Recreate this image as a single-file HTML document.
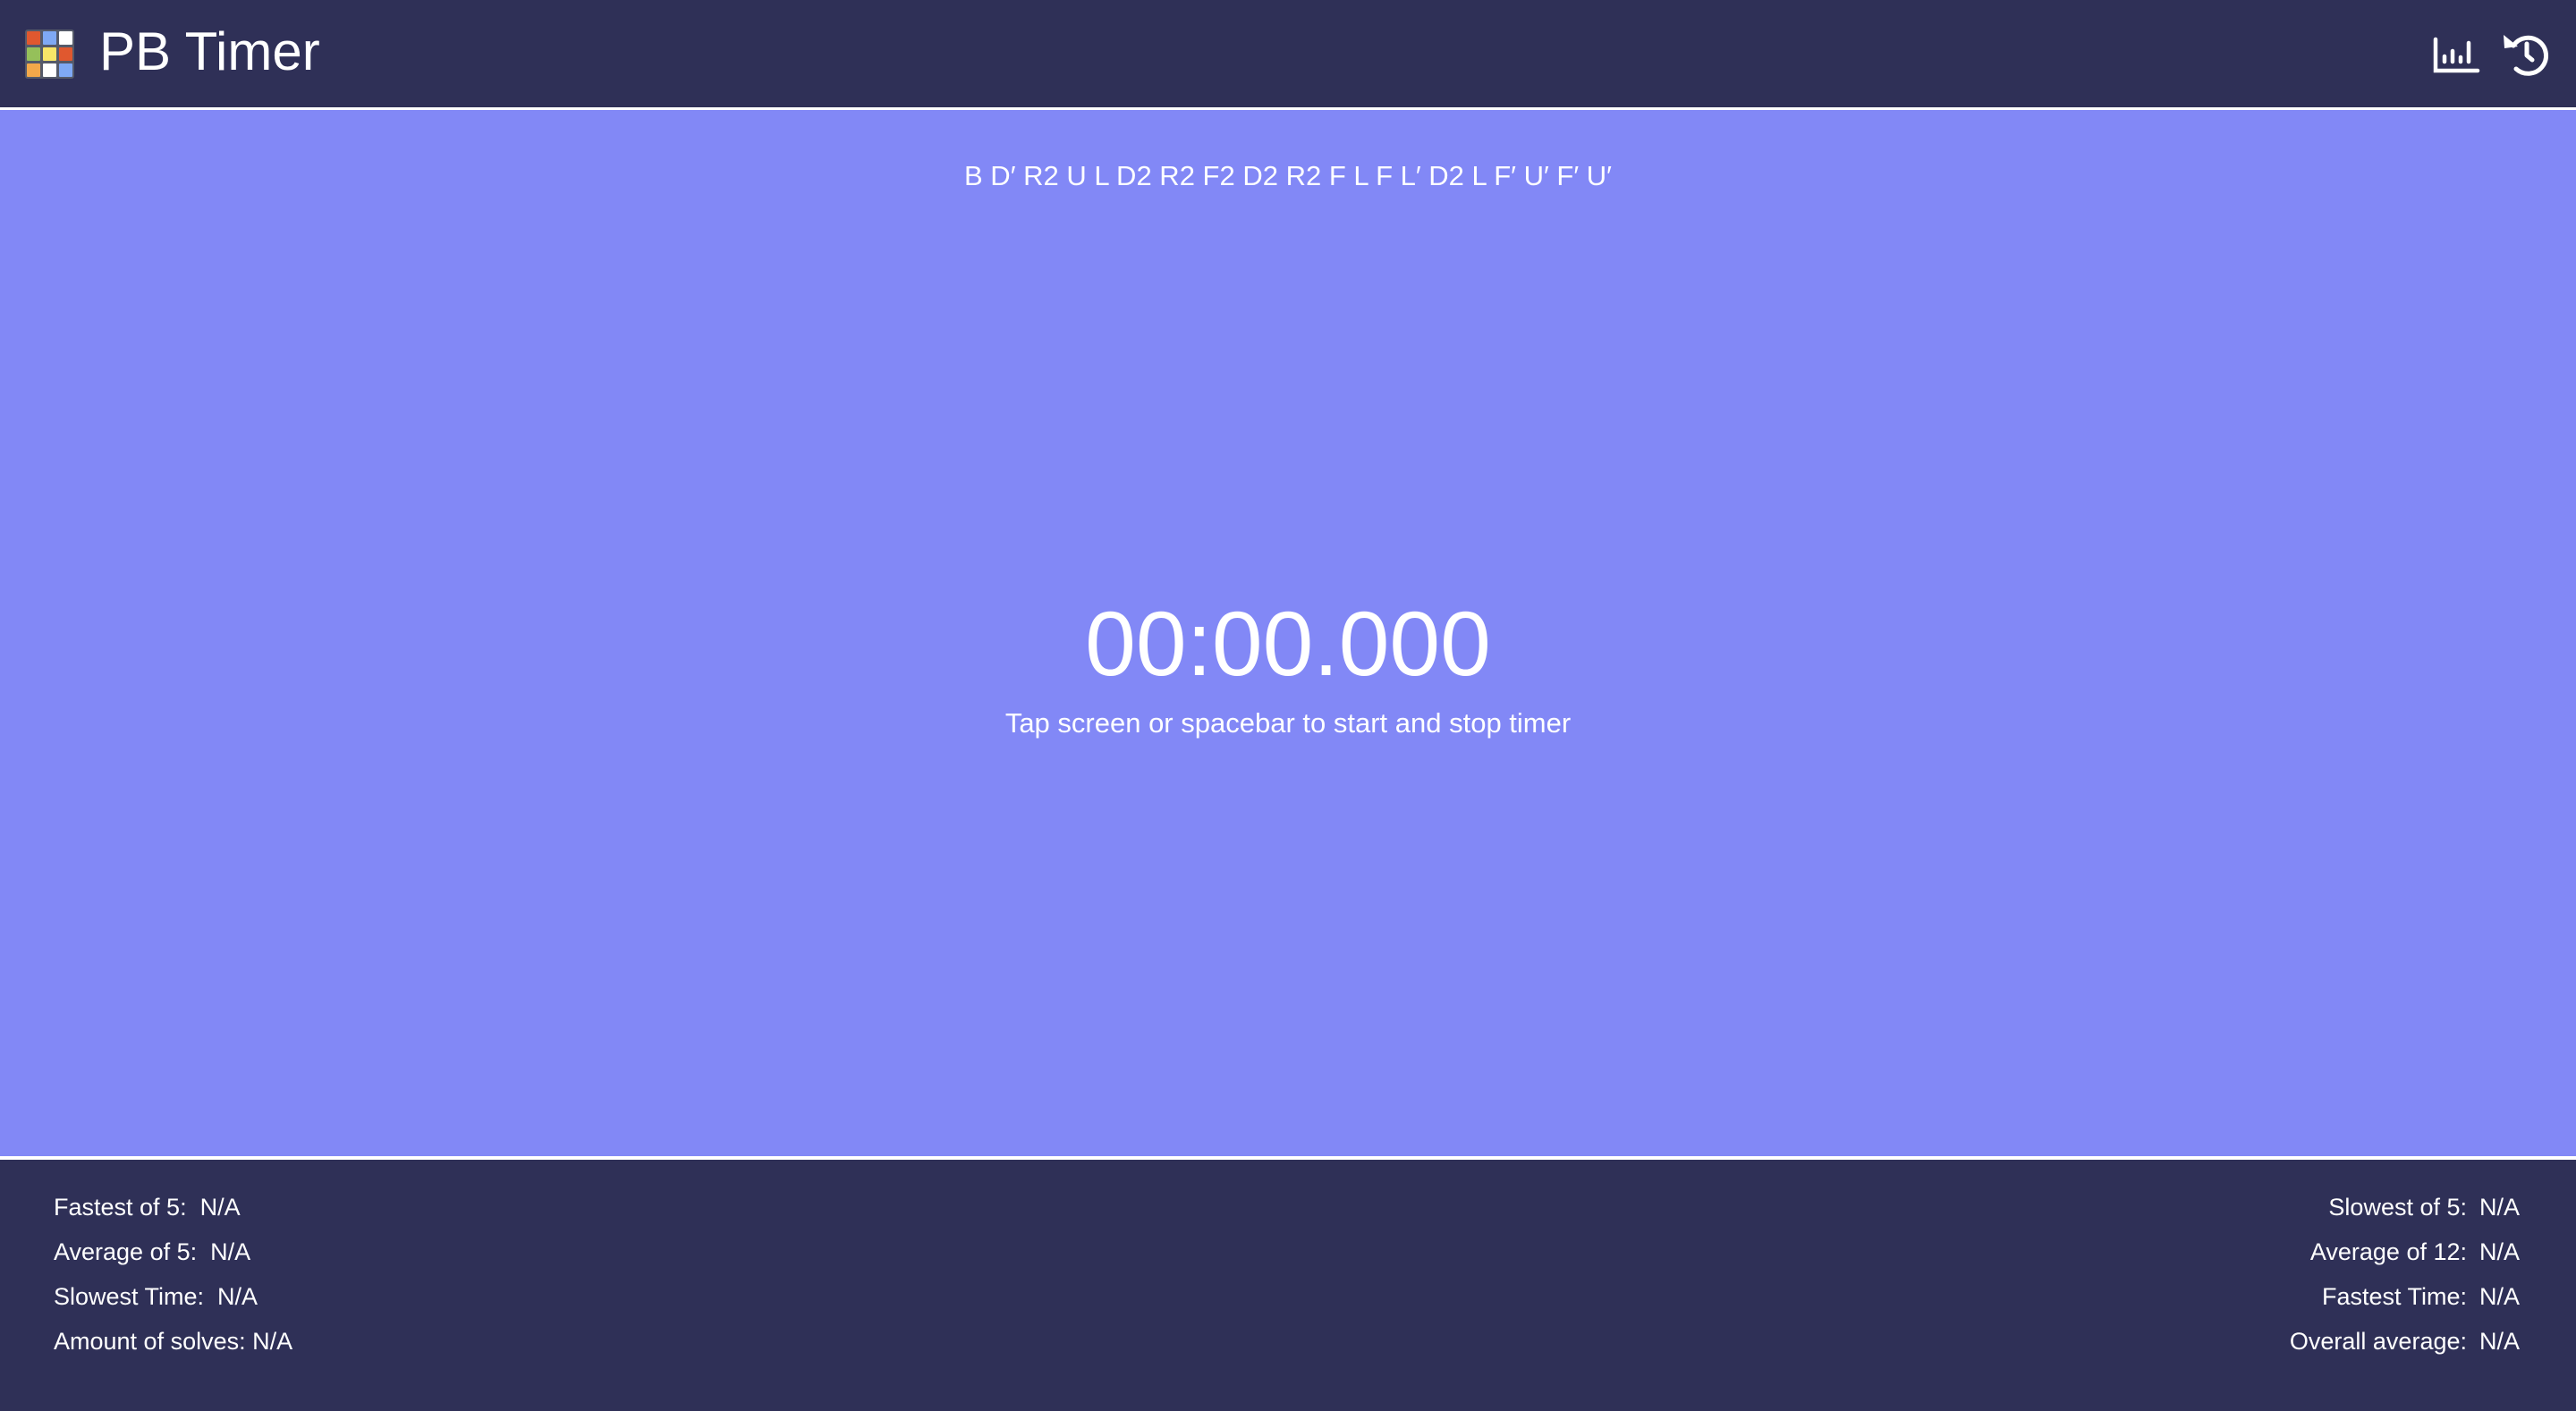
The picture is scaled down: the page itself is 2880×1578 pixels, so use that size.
<!DOCTYPE html>
<html><head><meta charset="utf-8"><style>
html,body{margin:0;padding:0;width:2880px;height:1578px;overflow:hidden;font-family:"Liberation Sans",sans-serif;color:#fff;background:#2f3057}
.hdr{position:absolute;left:0;top:0;width:2880px;height:120px;background:#2f3057}
.line1{position:absolute;left:0;top:120px;width:2880px;height:3px;background:#fff}
.main{position:absolute;left:0;top:123px;width:2880px;height:1170px;background:#8288f6}
.line2{position:absolute;left:0;top:1293px;width:2880px;height:4px;background:#fff}
.logo{position:absolute;left:28px;top:33px;width:55px;height:55px;background:#555a6a;border-radius:3px;display:grid;grid-template-columns:repeat(3,15px);grid-template-rows:repeat(3,15px);gap:3px;padding:2px;box-sizing:border-box}
.logo div{border-radius:1px}
.title{position:absolute;left:111px;top:23px;font-size:60px;line-height:70px}
.scr{position:absolute;left:0;width:2880px;text-align:center;top:177px;font-size:31px;line-height:40px}
.tm{position:absolute;left:0;width:2880px;text-align:center;top:660px;font-size:102px;line-height:120px;letter-spacing:0px}
.sub{position:absolute;left:0;width:2880px;text-align:center;top:790px;font-size:31px;line-height:38px}
.fl{position:absolute;left:60px;font-size:27px;line-height:32px}
.fr{position:absolute;right:58px;font-size:27px;line-height:32px;text-align:right}
.fr span{display:inline-block;width:50px;text-align:left;margin-left:14px}
</style></head><body>
<div class="hdr"></div>
<div class="logo">
<div style="background:#e0582f"></div><div style="background:#7fa9f5"></div><div style="background:#fff"></div>
<div style="background:#95c05a"></div><div style="background:#f7e568"></div><div style="background:#e0582f"></div>
<div style="background:#f3a84a"></div><div style="background:#fff"></div><div style="background:#7fa9f5"></div>
</div>
<div class="title">PB Timer</div>
<svg style="position:absolute;left:2720px;top:40px" width="54" height="44" viewBox="0 0 54 44"><g fill="none" stroke="#fff" stroke-width="4.5" stroke-linecap="round"><path d="M3 4V39H50"/><path d="M13 23V29M22 17V29M31 24V29M40 8V29"/></g></svg>
<svg style="position:absolute;left:2796px;top:34px" width="58" height="54" viewBox="0 0 58 54"><g fill="none" stroke="#fff" stroke-width="5" stroke-linecap="round" stroke-linejoin="round"><path d="M14 17A20 20 0 1 1 17 43"/><path d="M29 15V28L35 33"/></g><path d="M3 5L4 20L19 18Z" fill="#fff"/></svg>
<div class="line1"></div>
<div class="main"></div>
<div class="scr">B D′ R2 U L D2 R2 F2 D2 R2 F L F L′ D2 L F′ U′ F′ U′</div>
<div class="tm">00:00.000</div>
<div class="sub">Tap screen or spacebar to start and stop timer</div>
<div class="line2"></div>
<div class="fl" style="top:1334px">Fastest of 5:&nbsp; N/A</div>
<div class="fl" style="top:1384px">Average of 5:&nbsp; N/A</div>
<div class="fl" style="top:1434px">Slowest Time:&nbsp; N/A</div>
<div class="fl" style="top:1484px">Amount of solves: N/A</div>
<div class="fr" style="top:1334px">Slowest of 5:<span>N/A</span></div>
<div class="fr" style="top:1384px">Average of 12:<span>N/A</span></div>
<div class="fr" style="top:1434px">Fastest Time:<span>N/A</span></div>
<div class="fr" style="top:1484px">Overall average:<span>N/A</span></div>
</body></html>
